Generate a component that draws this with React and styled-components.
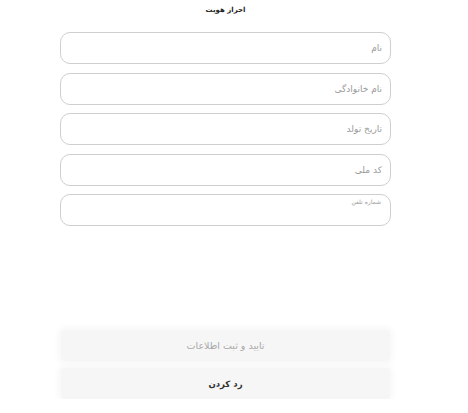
import React from 'react';
import styled, {createGlobalStyle} from 'styled-components';

const Global = createGlobalStyle`
  body {
    margin: 0;
    background: #fff;
    font-family: "DejaVu Sans", "Noto Sans", sans-serif;
  }
`;

const Page = styled.div`
  width: 451px;
  padding-top: 1px;
  display: flex;
  flex-direction: column;
  align-items: center;
  direction: rtl;
`;

const Title = styled.h1`
  margin: 0;
  font-size: 7px;
  font-weight: bold;
  line-height: 18px;
  color: #222;
`;

const Form = styled.div`
  width: 331px;
  margin-top: 13px;
  display: flex;
  flex-direction: column;
  gap: 8.5px;
`;

const Field = styled.input`
  box-sizing: border-box;
  width: 100%;
  height: 32px;
  border: 1px solid #cfcfcf;
  border-radius: 10px;
  padding: 0 8px;
  background: #fff;
  font-family: inherit;
  font-size: 9px;
  direction: rtl;
  outline: none;
  &::placeholder {
    color: #9a9a9a;
  }
`;

const Area = styled.textarea`
  box-sizing: border-box;
  width: 100%;
  height: 32px;
  border: 1px solid #cfcfcf;
  border-radius: 10px;
  padding: 3px 9px;
  resize: none;
  font-family: inherit;
  font-size: 6px;
  direction: rtl;
  outline: none;
  &::placeholder {
    color: #9a9a9a;
  }
`;

const Actions = styled.div`
  width: 329px;
  margin-top: 104px;
  display: flex;
  flex-direction: column;
  gap: 7px;
`;

const Button = styled.button`
  height: 31px;
  border: none;
  border-radius: 4px;
  background: #f6f6f6;
  box-shadow: 0 0 6px 3px #f8f8f8;
  font-family: inherit;
  font-size: ${p => (p.$primary ? '9.5px' : '8.5px')};
  font-weight: ${p => (p.$primary ? 'normal' : 'bold')};
  color: ${p => (p.$primary ? '#a8a8a8' : '#333')};
`;

export default function App() {
  return (
    <>
      <Global />
      <Page>
        <Title>احراز هویت</Title>
        <Form>
          <Field placeholder="نام" />
          <Field placeholder="نام خانوادگی" />
          <Field placeholder="تاریخ تولد" />
          <Field placeholder="کد ملی" />
          <Area placeholder="شماره تلفن" />
        </Form>
        <Actions>
          <Button $primary>تایید و ثبت اطلاعات</Button>
          <Button>رد کردن</Button>
        </Actions>
      </Page>
    </>
  );
}
